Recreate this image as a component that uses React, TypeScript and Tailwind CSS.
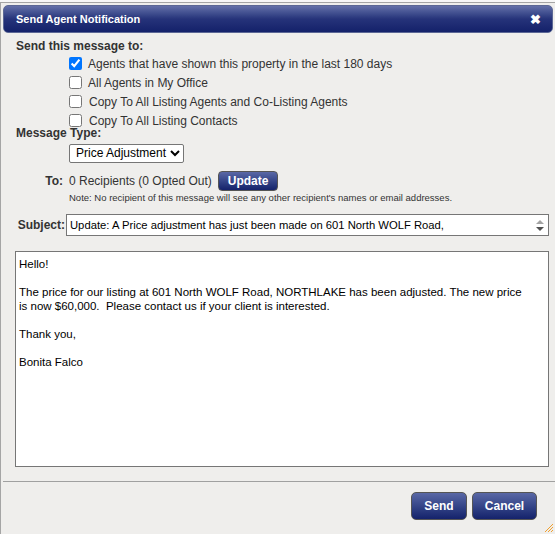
import { useState } from 'react'

const OPTIONS = [
  'Agents that have shown this property in the last 180 days',
  'All Agents in My Office',
  'Copy To All Listing Agents and Co-Listing Agents',
  'Copy To All Listing Contacts',
]

const BODY = `Hello!

The price for our listing at 601 North WOLF Road, NORTHLAKE has been adjusted. The new price
is now $60,000.  Please contact us if your client is interested.

Thank you,

Bonita Falco`

export default function App() {
  const [checked, setChecked] = useState([true, false, false, false])

  return (
    <div className="w-[555px] h-[534px] bg-[#f7f7f7] pt-[2px] font-['Liberation_Sans',Arial,sans-serif] text-[#333]">
      <div className="relative h-[532px] bg-[#efeeec] border-l border-t border-[#a5a5a5] pt-[2px] pl-[2px] flex flex-col">
        {/* Title bar */}
        <div className="h-[28px] mr-[2px] rounded-[5px] border border-[#5b6795] bg-gradient-to-b from-[#6470a8] via-[#26337a] to-[#14216a] flex items-center justify-between pl-[12px] pr-[11px]">
          <span className="text-white font-bold text-[11px]">Send Agent Notification</span>
          <span className="text-white font-bold text-[13px] leading-none">✖</span>
        </div>

        <div className="pl-[13px] pr-[6px]">
          <div className="mt-[6px] text-[12px] font-bold leading-[14px]">Send this message to:</div>

          <div className="ml-[53px] mt-[1px] flex flex-col">
            {OPTIONS.map((opt, i) => (
              <label key={i} className="h-[19px] flex items-center gap-[6px] text-[12px]">
                <input
                  type="checkbox"
                  checked={checked[i]}
                  onChange={() => setChecked(c => c.map((v, j) => (j === i ? !v : v)))}
                  className="m-0 w-[13px] h-[13px] accent-[#0075ff]"
                />
                <span className={i > 1 ? 'ml-[1px]' : ''}>{opt}</span>
              </label>
            ))}
          </div>

          <div className="-mt-[4px] text-[12px] font-bold leading-[14px]">Message Type:</div>
          <div className="ml-[53px]">
            <select className="h-[19px] text-[12px] text-black bg-white border border-[#767676] rounded-[2px] pl-[2px] pr-0 font-['Liberation_Sans',Arial,sans-serif]">
              <option>Price Adjustment</option>
            </select>
          </div>

          {/* To row */}
          <div className="mt-[7px] flex items-center">
            <div className="w-[47px] text-right text-[12px] font-bold">To:</div>
            <div className="ml-[6px] text-[12px]">0 Recipients (0 Opted Out)</div>
            <button className="ml-[6px] h-[20px] px-[9px] rounded-[4px] border border-[#555] bg-gradient-to-b from-[#5a68a6] to-[#15226b] text-white font-bold text-[12px]">
              Update
            </button>
          </div>
          <div className="ml-[53px] mt-[1px] text-[9.5px] leading-[12px]">
            Note: No recipient of this message will see any other recipient's names or email addresses.
          </div>

          {/* Subject */}
          <div className="mt-[10px] flex items-center">
            <div className="w-[49px] text-right text-[12px] font-bold">Subject:</div>
            <div className="ml-[1px] w-[483px] h-[22px] bg-white border border-[#767676] flex items-center justify-between pl-[3px] pr-[4px]">
              <span className="text-[11.25px] text-black">
                Update: A Price adjustment has just been made on 601 North WOLF Road,
              </span>
              <div className="flex flex-col items-center gap-[3px]">
                <span className="w-0 h-0 border-l-[4px] border-r-[4px] border-b-[4px] border-l-transparent border-r-transparent border-b-[#a3a3a3]" />
                <span className="w-0 h-0 border-l-[4px] border-r-[4px] border-t-[4px] border-l-transparent border-r-transparent border-t-[#505050]" />
              </div>
            </div>
          </div>

          {/* Body */}
          <textarea
            defaultValue={BODY}
            className="mt-[15px] -ml-[1px] block w-[534px] h-[216px] resize-none bg-white border border-[#767676] px-[3px] pt-[5px] text-[11.5px] leading-[14px] text-black outline-none font-['Liberation_Sans',Arial,sans-serif]"
          />
        </div>

        <div className="mt-[14px] border-t border-[#a0a0a0]" />

        <div className="mt-[10px] flex justify-end gap-[5px] pr-[18px]">
          <button className="w-[56px] h-[28px] rounded-[5px] border border-[#555] bg-gradient-to-b from-[#5a68a6] to-[#15226b] text-white font-bold text-[12px]">
            Send
          </button>
          <button className="w-[65px] h-[28px] rounded-[5px] border border-[#555] bg-gradient-to-b from-[#5a68a6] to-[#15226b] text-white font-bold text-[12px]">
            Cancel
          </button>
        </div>

        {/* resize grip */}
        <svg className="absolute right-[1px] bottom-[1px]" width="12" height="12" viewBox="0 0 12 12">
          <path d="M11 3 L3 11 M11 6 L6 11 M11 9 L9 11" stroke="#f0a030" strokeWidth="1" fill="none" />
        </svg>
      </div>
    </div>
  )
}
